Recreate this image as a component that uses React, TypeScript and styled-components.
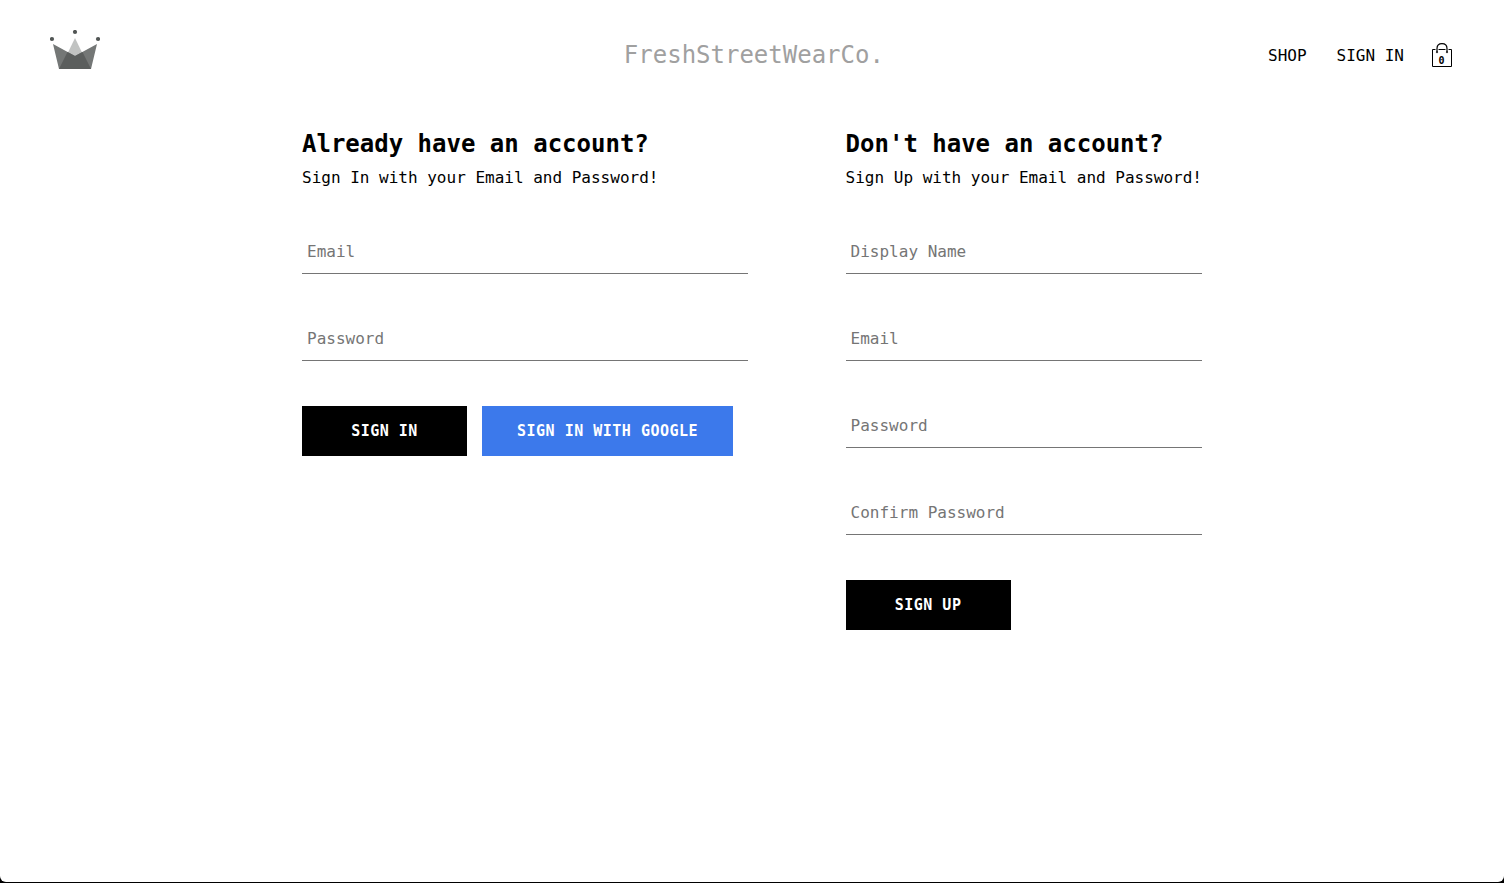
import React from "react";
import styled, { createGlobalStyle } from "styled-components";

const GlobalStyle = createGlobalStyle`
  * { box-sizing: border-box; }
  body {
    margin: 0;
    background: #000;
    color: #000;
    font-family: "DejaVu Sans Mono", Menlo, monospace;
    font-size: 16px;
    line-height: 19px;
  }
`;

const Page = styled.div`
  min-height: calc(100vh - 1px);
  padding: 20px 40px;
  background: #fff;
  border-radius: 0 0 6px 6px;
`;

const Header = styled.header`
  display: grid;
  grid-template-columns: 41% auto 1fr;
  align-items: center;
  height: 70px;
  margin-bottom: 40px;
`;

const LogoLink = styled.a`
  align-self: start;
  justify-self: start;
  padding: 10px;

  svg { display: block; }
`;

const Brand = styled.div`
  color: #a0a0a0;
  font-size: 24px;
  line-height: 28px;
`;

const Nav = styled.nav`
  display: flex;
  align-items: center;
  justify-content: flex-end;
`;

const NavLink = styled.a`
  padding: 10px 15px;
  color: inherit;
  text-decoration: none;
`;

const CartButton = styled.button`
  position: relative;
  display: flex;
  align-items: center;
  justify-content: center;
  width: 45px;
  height: 45px;
  padding: 0;
  border: 0;
  background: none;
  cursor: pointer;
`;

const CartCount = styled.span`
  position: absolute;
  inset: 12px 0 0;
  display: flex;
  align-items: center;
  justify-content: center;
  color: #000;
  font: bold 10px/12px "DejaVu Sans Mono", Menlo, monospace;
`;

const Columns = styled.main`
  display: flex;
  flex-wrap: wrap;
  align-items: flex-start;
  justify-content: space-between;
  gap: 45px;
  max-width: 900px;
  margin: 0 auto;
`;

const Panel = styled.section`
  display: flex;
  flex-direction: column;
`;

const Title = styled.h2`
  margin: 0 0 10px;
  font-size: 24px;
  line-height: 28px;
`;

const Form = styled.form`
  display: flex;
  flex-direction: column;
  gap: 45px;
  margin-top: 45px;
`;

const Input = styled.input`
  width: 100%;
  height: 42px;
  padding: 0 10px 2px 5px;
  border: 0;
  border-bottom: 1px solid #757575;
  border-radius: 0;
  outline: 0;
  background: #fff;
  font: inherit;

  &::placeholder { color: #757575; opacity: 1; }
`;

const Actions = styled.div`
  display: flex;
  gap: 15px;
  padding-right: 15px;
`;

const Button = styled.button<{ $google?: boolean }>`
  min-width: 165px;
  height: 50px;
  padding: 0 35px;
  border: 0;
  background: ${(p) => (p.$google ? "#3c79eb" : "#000")};
  color: #fff;
  font: bold 15px/18px "DejaVu Sans Mono", Menlo, monospace;
  letter-spacing: 0.5px;
  text-transform: uppercase;
  white-space: nowrap;
  cursor: pointer;
`;

const Crown = () => (
  <svg width="50" height="39" viewBox="0 0 50 39" aria-hidden="true">
    <path d="M25 8 40 39H10Z" fill="#c1c3c2" />
    <path d="M3 14 25 26 47 14 41 39H9Z" fill="#747776" />
    <path d="M17.5 22 25 26 32.5 22 41 39H9Z" fill="#5b5e5d" />
    <g fill="#515554">
      <circle cx="2" cy="9" r="2.1" />
      <circle cx="25" cy="2" r="2.1" />
      <circle cx="48" cy="9" r="2.1" />
    </g>
  </svg>
);

const Bag = () => (
  <svg width="24" height="24" viewBox="0 0 24 24" fill="none" stroke="#000" aria-hidden="true">
    <path d="M2.5 6.5H21.5V23.5H2.5Z" />
    <path d="M7 9V5.5C7 2.3 9 .6 12 .6S17 2.3 17 5.5V9" stroke="#fff" strokeWidth="3" />
    <path d="M7 9V5.5C7 2.3 9 .6 12 .6S17 2.3 17 5.5V9" strokeWidth="1.2" />
    <circle cx="7" cy="9.2" r="0.6" />
    <circle cx="17" cy="9.2" r="0.6" />
  </svg>
);

interface Field {
  label: string;
  type: string;
}

const signInFields: Field[] = [
  { label: "Email", type: "email" },
  { label: "Password", type: "password" },
];

const signUpFields: Field[] = [
  { label: "Display Name", type: "text" },
  { label: "Email", type: "email" },
  { label: "Password", type: "password" },
  { label: "Confirm Password", type: "password" },
];

const Fields = ({ items }: { items: Field[] }) => (
  <>
    {items.map(({ label, type }) => (
      <Input key={label} type={type} placeholder={label} aria-label={label} />
    ))}
  </>
);

export default function App() {
  const stay = (e: React.FormEvent) => e.preventDefault();
  return (
    <>
      <GlobalStyle />
      <Page>
        <Header>
          <LogoLink href="#home" aria-label="Home">
            <Crown />
          </LogoLink>
          <Brand>FreshStreetWearCo.</Brand>
          <Nav>
            <NavLink href="#shop">SHOP</NavLink>
            <NavLink href="#signin">SIGN IN</NavLink>
            <CartButton type="button" aria-label="Cart">
              <Bag />
              <CartCount>0</CartCount>
            </CartButton>
          </Nav>
        </Header>
        <Columns>
          <Panel>
            <Title>Already have an account?</Title>
            <span>Sign In with your Email and Password!</span>
            <Form onSubmit={stay}>
              <Fields items={signInFields} />
              <Actions>
                <Button type="submit">Sign In</Button>
                <Button type="button" $google>
                  Sign In With Google
                </Button>
              </Actions>
            </Form>
          </Panel>
          <Panel>
            <Title>Don't have an account?</Title>
            <span>Sign Up with your Email and Password!</span>
            <Form onSubmit={stay}>
              <Fields items={signUpFields} />
              <Actions>
                <Button type="submit">Sign Up</Button>
              </Actions>
            </Form>
          </Panel>
        </Columns>
      </Page>
    </>
  );
}
